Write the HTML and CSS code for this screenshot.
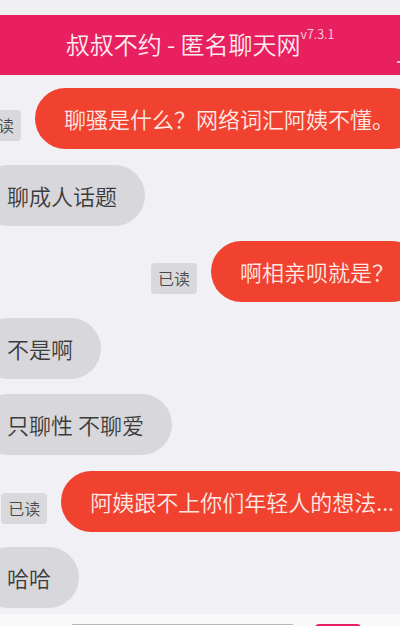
FILE: index.html
```html
<!DOCTYPE html>
<html lang="zh-CN">
<head>
<meta charset="utf-8">
<title>叔叔不约 - 匿名聊天网</title>
<link rel="stylesheet" href="styles.css">
</head>
<body>
<div class="app">
  <div class="status"></div>
  <header class="topbar">
    <h1 class="title">叔叔不约 - 匿名聊天网<sup class="ver">v7.3.1</sup></h1>
    <span class="edge"></span>
  </header>
  <main class="chat">
    <div class="row me">
      <span class="tag">已读</span>
      <div class="bubble red">聊骚是什么？网络词汇阿姨不懂。</div>
    </div>
    <div class="row them">
      <div class="bubble gray">聊成人话题</div>
    </div>
    <div class="row me">
      <span class="tag">已读</span>
      <div class="bubble red">啊相亲呗就是？</div>
    </div>
    <div class="row them">
      <div class="bubble gray">不是啊</div>
    </div>
    <div class="row them">
      <div class="bubble gray">只聊性 不聊爱</div>
    </div>
    <div class="row me">
      <span class="tag">已读</span>
      <div class="bubble red">阿姨跟不上你们年轻人的想法...</div>
    </div>
    <div class="row them">
      <div class="bubble gray">哈哈</div>
    </div>
  </main>
  <footer class="inputbar">
    <div class="input"></div>
    <div class="send"></div>
  </footer>
</div>
</body>
</html>
```
FILE: styles.css
```css
* { box-sizing: border-box; }
html, body { margin: 0; padding: 0; }
body {
  width: 400px;
  height: 626px;
  overflow: hidden;
  background: #f1f0f4;
  font-family: "Noto Sans CJK SC", "Noto Sans", sans-serif;
  font-weight: 350;
}
.app {
  display: flex;
  flex-direction: column;
  height: 626px;
  overflow: hidden;
}
.status {
  height: 15px;
  background: #f0f0f2;
  flex: none;
}
.topbar {
  height: 60px;
  flex: none;
  background: #e8205f;
  display: flex;
  align-items: center;
  justify-content: center;
  position: relative;
}
.title {
  margin: 0;
  color: #fcecf1;
  font-size: 24px;
  font-weight: 350;
  line-height: 30px;
  white-space: nowrap;
  transform: translateY(-1px);
}
.ver {
  font-size: 12.5px;
  vertical-align: top;
  position: relative;
  top: -10px;
  color: #f7d5df;
}
.edge {
  position: absolute;
  right: 0;
  top: 46px;
  width: 3px;
  height: 2px;
  background: #f4c3d2;
}
.chat {
  flex: 1;
  margin: 13px -22px 0 -22px;
  display: flex;
  flex-direction: column;
  gap: 15.5px;
  overflow: hidden;
}
.row {
  display: flex;
  align-items: flex-end;
  gap: 14px;
}
.row.me { justify-content: flex-end; }
.row.them { justify-content: flex-start; }
.bubble {
  height: 61px;
  padding: 0 28px 0 29px;
  border-radius: 31px;
  font-size: 22px;
  line-height: 61px;
  white-space: nowrap;
}
.bubble.red {
  background: #f1412f;
  color: #fde9e6;
}
.bubble.gray {
  background: #d8d7db;
  color: #3c3c3c;
}
.tag {
  height: 31px;
  line-height: 31px;
  padding: 0 7px;
  margin-bottom: 8px;
  border-radius: 4px;
  background: #d9d9dc;
  color: #4a4a4a;
  font-size: 16px;
  white-space: nowrap;
}
.inputbar {
  flex: none;
  height: 12px;
  margin-top: 6px;
  background: #f9f9fa;
  display: flex;
  align-items: flex-start;
  padding: 10px 0 0 72px;
  gap: 22px;
}
.input {
  width: 221px;
  height: 10px;
  border-top: 1px solid #b9b9bd;
  background: #fff;
}
.send {
  width: 46px;
  height: 10px;
  border-radius: 4px 4px 0 0;
  background: #e8205f;
}
```
